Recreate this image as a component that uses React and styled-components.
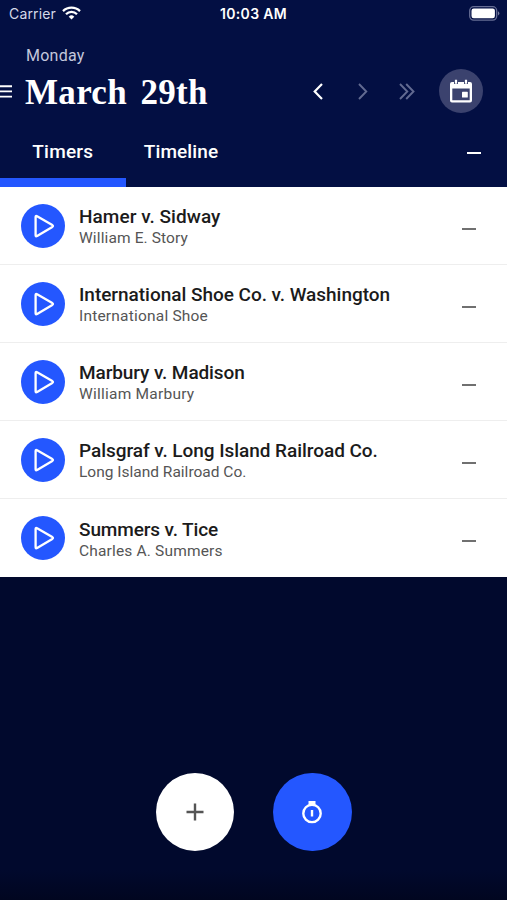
import React, { useState } from 'react';
import styled, { createGlobalStyle } from "styled-components";

const Global = createGlobalStyle`
    * {
        box-sizing: border-box;
    }
    body {
        margin: 0;
        background-color: #01092d;
        font-family: Roboto, "Liberation Sans", sans-serif;
    }
    button {
        display: block;
        padding: 0;
        border: none;
        background: none;
        font-family: inherit;
        cursor: pointer;
    }
    svg {
        display: block;
    }
`;
const Screen = styled.div`
    display: flex;
    flex-direction: column;
    width: 507px;
    height: 900px;
    overflow: hidden;
    background: linear-gradient(#01092d 0, #01092d 870px, #010620 900px);
`;
const Header = styled.header`
    display: flex;
    flex-direction: column;
    height: 186.5px;
    background-color: #030f43;
    color: #fff;
`;
const StatusBar = styled.div`
    display: grid;
    grid-template-columns: 1fr auto 1fr;
    align-items: center;
    height: 28px;
    padding: 0 7px 2px 9px;
    font-family: Inter, sans-serif;
    font-size: 14px;
`;
const Carrier = styled.div`
    display: flex;
    align-items: center;
    gap: 6px;
    color: #d5d9e8;
    letter-spacing: 0.15px;
`;
const Clock = styled.div`
    margin-left: -2px;
    font-weight: 600;
    letter-spacing: 0.35px;
`;
const Battery = styled.div`
    display: flex;
    justify-content: flex-end;
`;
const DateBar = styled.div`
    display: flex;
    height: 91px;
`;
const MenuButton = styled.button`
    display: flex !important;
    align-items: flex-start;
    width: 25px;
    padding-top: 56px !important;
    flex-shrink: 0;
`;
const DateText = styled.div`
    flex: 1;
    padding-top: 18px;
`;
const Weekday = styled.div`
    font-size: 16px;
    line-height: 20px;
    letter-spacing: 0.25px;
    padding-left: 1px;
    color: #c3c7dc;
`;
const DateTitle = styled.h1`
    margin: 7px 0 0;
    font-family: "Liberation Serif", serif;
    font-size: 35px;
    line-height: 40px;
    font-weight: bold;
    letter-spacing: 0.3px;
    word-spacing: 4.5px;
    white-space: nowrap;
`;
const DateNav = styled.nav`
    display: flex;
    padding: 41px 24.5px 0 0;
`;
const NavButton = styled.button`
    display: flex !important;
    align-items: center;
    justify-content: center;
    width: 44.5px;
    height: 44px;
    color: ${({$dim}) => $dim ? "#626a91" : "#fff"};
`;
const CalendarButton = styled.button`
    display: grid !important;
    place-items: center;
    width: 44px;
    height: 44px;
    margin-left: 9px;
    border-radius: 50%;
    background-color: #3b426e !important;
`;
const Tabs = styled.div`
    display: flex;
    flex: 1;
    padding-right: 26px;
`;
const Tab = styled.button`
    width: ${({$width}) => $width}px;
    padding: 7px 0 0 !important;
    color: #fff;
    font-size: 19px;
    font-weight: 500;
    letter-spacing: ${({$spacing}) => $spacing}px;
    border-bottom: 9px solid ${({$active}) => $active ? "#2457ff" : "transparent"} !important;
`;
const Dash = styled.div`
    width: 14px;
    height: 2px;
    background-color: ${({$color}) => $color};
`;
const Total = styled.div`
    display: flex;
    flex: 1;
    justify-content: flex-end;
    padding-top: 33px;
`;
const List = styled.ul`
    margin: 0;
    padding: 0;
    list-style: none;
    background-color: #fff;
`;
const Row = styled.li`
    display: flex;
    align-items: center;
    height: 78.15px;
    padding: 0 31px 0 20.5px;
    border-bottom: 1px solid #eee;

    &:last-child {
        border-bottom-color: transparent;
    }
`;
const PlayButton = styled.button`
    width: 44px;
    height: 44px;
    margin: 1px 14.5px 0 0;
    flex-shrink: 0;
`;
const Matter = styled.div`
    flex: 1;
    white-space: nowrap;
    padding-top: 3px;
`;
const Name = styled.div`
    font-size: 19px;
    line-height: 23px;
    font-weight: 500;
    color: #1b1b1b;
    letter-spacing: ${({$spacing}) => $spacing}px;
`;
const Client = styled.div`
    font-size: 15.5px;
    line-height: 20px;
    color: #555;
    letter-spacing: ${({$spacing}) => $spacing}px;
`;
const RowTotal = styled.div`
    padding-top: 7px;
`;
const Actions = styled.div`
    display: flex;
    justify-content: center;
    gap: 39px;
    margin-top: auto;
    padding-bottom: 49px;
`;
const Fab = styled.button`
    display: grid !important;
    place-items: center;
    width: 78.5px;
    height: 78.5px;
    border-radius: 50%;
    background-color: ${({$color}) => $color} !important;
`;

const timers = [
    { name: "Hamer v. Sidway", client: "William E. Story", nameSpacing: 0.05, clientSpacing: 0.12 },
    { name: "International Shoe Co. v. Washington", client: "International Shoe", nameSpacing: -0.03, clientSpacing: 0.2 },
    { name: "Marbury v. Madison", client: "William Marbury", nameSpacing: -0.1, clientSpacing: 0.23 },
    { name: "Palsgraf v. Long Island Railroad Co.", client: "Long Island Railroad Co.", nameSpacing: -0.05, clientSpacing: 0 },
    { name: "Summers v. Tice", client: "Charles A. Summers", nameSpacing: -0.12, clientSpacing: 0.17 },
];

function WifiIcon() {
    return (
        <svg width="19" height="14" viewBox="0 0 19 14" fill="none" stroke="#fff" strokeWidth="2.3">
            <path d="M1 5.1a12.2 12.2 0 0 1 17 0" />
            <path d="M4 8.2a7.8 7.8 0 0 1 11 0" />
            <path d="M9.5 13.6 6.7 10.7a4 4 0 0 1 5.6 0z" fill="#fff" stroke="none" />
        </svg>
    )
}

function BatteryIcon() {
    return (
        <svg width="31" height="15" viewBox="0 0 31 15">
            <rect x="0.7" y="0.7" width="27" height="13.4" rx="4" fill="none" stroke="#666d94" strokeWidth="1.3" />
            <rect x="2.5" y="2.5" width="23.4" height="9.8" rx="2.2" fill="#fff" />
            <path d="M29 5.2q2.8 2.2 0 4.4z" fill="#777e9f" />
        </svg>
    )
}

function Chevron({double}) {
    return (
        <svg width={double ? 16 : 10} height="17" viewBox={double ? "0 0 16 17" : "0 0 10 17"} fill="none" stroke="currentColor" strokeWidth="1.9">
            <path d="m1 1 7.3 7.5L1 16" />
            {double && <path d="m7.2 1 7.3 7.5L7.2 16" />}
        </svg>
    )
}

function PlayIcon() {
    return (
        <svg width="44" height="44" viewBox="0 0 44 44">
            <circle cx="22" cy="22" r="22" fill="#2457ff" />
            <path d="M14.6 13v18.200q0 1.600 1.500.8l15.200-9.100q1.300-.9 0-1.800l-15.200-8.900q-1.500-.8-1.500.8z" fill="none" stroke="#fff" strokeWidth="2.300" strokeLinejoin="round" />
        </svg>
    )
}

function App() {
    const [tab, setTab] = useState("timers");

    return (
        <Screen>
            <Global />
            <Header>
                <StatusBar>
                    <Carrier>Carrier <WifiIcon /></Carrier>
                    <Clock>10:03 AM</Clock>
                    <Battery><BatteryIcon /></Battery>
                </StatusBar>
                <DateBar>
                    <MenuButton aria-label="Menu">
                        <svg width="13" height="14" viewBox="0 0 13 14" stroke="#fff" strokeWidth="1.9">
                            <path d="M0 2.2h12M0 7.4h12M0 12.6h12" />
                        </svg>
                    </MenuButton>
                    <DateText>
                        <Weekday>Monday</Weekday>
                        <DateTitle>March 29th</DateTitle>
                    </DateText>
                    <DateNav>
                        <NavButton aria-label="Previous day">
                            <svg width="10" height="17" viewBox="0 0 10 17" fill="none" stroke="currentColor" strokeWidth="2.2">
                                <path d="M9 1 1.7 8.5 9 16" />
                            </svg>
                        </NavButton>
                        <NavButton $dim aria-label="Next day"><Chevron /></NavButton>
                        <NavButton $dim aria-label="Today"><Chevron double /></NavButton>
                        <CalendarButton aria-label="Calendar">
                            <svg width="24" height="24" viewBox="0 0 24 24">
                                <path fillRule="evenodd" fill="#fff" d="M3 3h18a2 2 0 0 1 2 2v16.500a2 2 0 0 1-2 2H3a2 2 0 0 1-2-2V5a2 2 0 0 1 2-2zM3.300 9.500v11.700h17.400V9.500z" />
                                <path d="M7 .8v4.200M17 .8v4.200" stroke="#3b426e" strokeWidth="4" />
                                <path d="M7 .8v4M17 .8v4" stroke="#fff" strokeWidth="2.200" />
                                <rect x="13" y="12.800" width="5.800" height="5.800" rx=".6" fill="#fff" />
                            </svg>
                        </CalendarButton>
                    </DateNav>
                </DateBar>
                <Tabs>
                    <Tab $width={125.5} $spacing={0.2} $active={tab === "timers"} onClick={() => setTab("timers")}>Timers</Tab>
                    <Tab $width={111} $spacing={0.1} $active={tab === "timeline"} onClick={() => setTab("timeline")}>Timeline</Tab>
                    <Total><Dash $color="#fff" /></Total>
                </Tabs>
            </Header>
            <List>
                {timers.map((timer) => (
                    <Row key={timer.name}>
                        <PlayButton aria-label="Start timer"><PlayIcon /></PlayButton>
                        <Matter>
                            <Name $spacing={timer.nameSpacing}>{timer.name}</Name>
                            <Client $spacing={timer.clientSpacing}>{timer.client}</Client>
                        </Matter>
                        <RowTotal><Dash $color="#707070" /></RowTotal>
                    </Row>
                ))}
            </List>
            <Actions>
                <Fab $color="#fff" aria-label="Add">
                    <svg width="18" height="18" viewBox="0 0 18 18" stroke="#555" strokeWidth="2.4">
                        <path d="M9 .5v17M.5 9h17" />
                    </svg>
                </Fab>
                <Fab $color="#2457ff" aria-label="Start new timer">
                    <svg width="22" height="24" viewBox="0 0 22 24" fill="none" stroke="#fff" strokeWidth="2.4">
                        <circle cx="11" cy="13.400" r="8.700" />
                        <path d="M7.500 2.700h7" strokeWidth="3.400" />
                        <path d="M11 10v6.500" strokeWidth="2.400" />
                    </svg>
                </Fab>
            </Actions>
        </Screen>
    )
}

export default App
